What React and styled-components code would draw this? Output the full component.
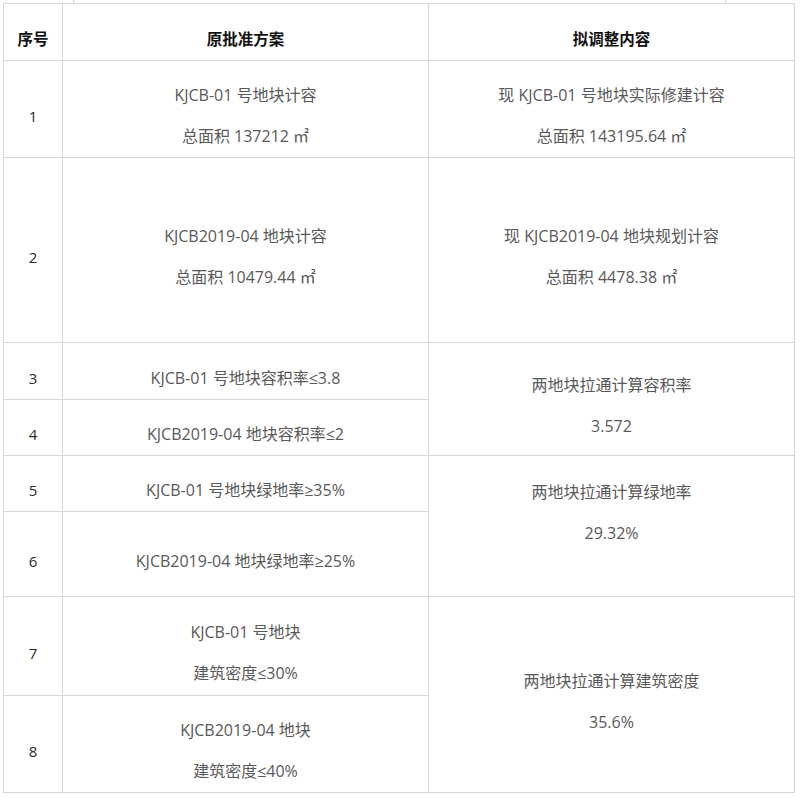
import React from "react";
import styled, { createGlobalStyle } from "styled-components";

const Global = createGlobalStyle`
  html, body { margin: 0; padding: 0; background: #fff; }
  body { font-family: "Open Sans", "Noto Sans CJK SC", sans-serif; }
`;

const Page = styled.div`
  width: 800px;
`;

const TopStrip = styled.div`
  margin-left: 73px;
  width: 651px;
  height: 3px;
  border-left: 1px solid #d6d6d6;
  border-right: 1px solid #d6d6d6;
`;

const Table = styled.div`
  margin-left: 3px;
  display: grid;
  grid-template-columns: 59px 366px 366px;
  grid-template-rows: 57px 97px 185px 57px 56px 56px 85px 99px 97px;
  border-left: 1px solid #d6d6d6;
  border-top: 1px solid #d6d6d6;
  width: max-content;
`;

const Cell = styled.div`
  box-sizing: border-box;
  border-right: 1px solid #d6d6d6;
  border-bottom: 1px solid #d6d6d6;
  display: flex;
  flex-direction: column;
  align-items: center;
  justify-content: center;
  gap: 17px;
  padding-top: 13px;
  padding-bottom: ${(p) => p.$padBottom || 0}px;
  grid-row: ${(p) => p.$rows || "auto"};
  font-family: "Open Sans", "Noto Sans CJK SC", sans-serif;
  font-size: ${(p) => (p.$head ? "15.5px" : p.$num ? "15px" : "16px")};
  line-height: 24px;
  color: ${(p) => (p.$head ? "#111" : p.$num ? "#2a2a2a" : "#595959")};
  font-weight: ${(p) => (p.$head ? 700 : 400)};
  text-align: center;
  white-space: nowrap;
`;

const Line = styled.span`
  display: block;
`;

const rows = [
  { n: "1", a: ["KJCB-01 号地块计容", "总面积 137212 ㎡"], b: ["现 KJCB-01 号地块实际修建计容", "总面积 143195.64 ㎡"] },
  { n: "2", a: ["KJCB2019-04 地块计容", "总面积 10479.44 ㎡"], b: ["现 KJCB2019-04 地块规划计容", "总面积 4478.38 ㎡"] },
  { n: "3", a: ["KJCB-01 号地块容积率≤3.8"], b: ["两地块拉通计算容积率", "3.572"], span: 2 },
  { n: "4", a: ["KJCB2019-04 地块容积率≤2"] },
  { n: "5", a: ["KJCB-01 号地块绿地率≥35%"], b: ["两地块拉通计算绿地率", "29.32%"], span: 2, pb: 41 },
  { n: "6", a: ["KJCB2019-04 地块绿地率≥25%"] },
  { n: "7", a: ["KJCB-01 号地块", "建筑密度≤30%"], b: ["两地块拉通计算建筑密度", "35.6%"], span: 2 },
  { n: "8", a: ["KJCB2019-04 地块", "建筑密度≤40%"] },
];

export default function App() {
  return (
    <Page>
      <Global />
      <TopStrip />
      <Table>
        <Cell $head>序号</Cell>
        <Cell $head>原批准方案</Cell>
        <Cell $head>拟调整内容</Cell>
        {rows.map((r) => (
          <React.Fragment key={r.n}>
            <Cell $num>{r.n}</Cell>
            <Cell>
              {r.a.map((t) => (
                <Line key={t}>{t}</Line>
              ))}
            </Cell>
            {r.b && (
              <Cell $rows={r.span ? `span ${r.span}` : "auto"} $padBottom={r.pb}>
                {r.b.map((t) => (
                  <Line key={t}>{t}</Line>
                ))}
              </Cell>
            )}
          </React.Fragment>
        ))}
      </Table>
    </Page>
  );
}
